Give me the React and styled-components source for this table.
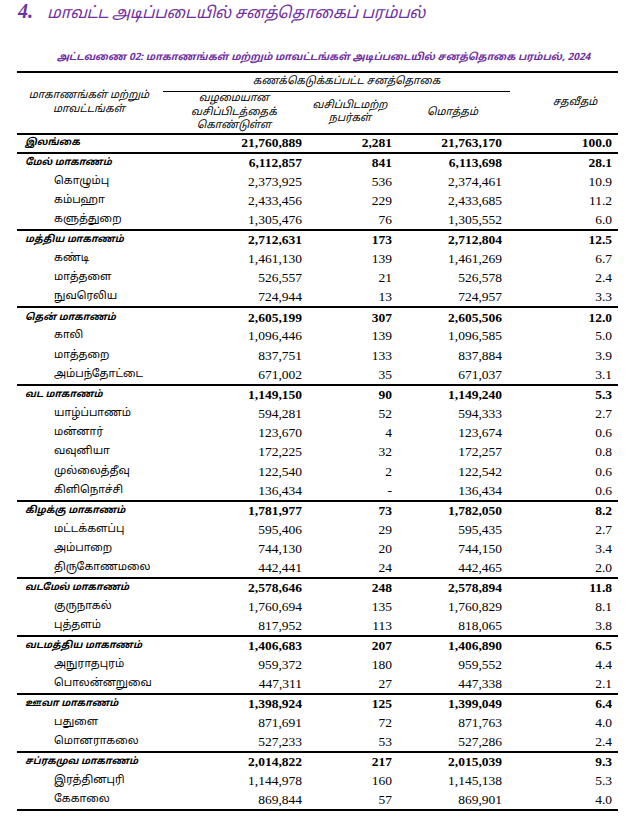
import React from "react";
import styled, { createGlobalStyle } from "styled-components";

const Global = createGlobalStyle`
  html, body { margin: 0; padding: 0; background: #fff; }
  body { font-family: "Liberation Serif", "Times New Roman", serif; color: #000; }
`;

const TAMIL = `"Noto Sans Tamil", "Lohit Tamil", "Latha", "Noto Serif Tamil", "Liberation Sans", sans-serif`;
const PURPLE = "#7030a0";

const Page = styled.div`
  width: 632px;
  padding: 0 14px 0 17px;
  box-sizing: border-box;
`;

const Title = styled.h1`
  margin: 0;
  padding: 0 0 0 1px;
  box-sizing: border-box;
  display: flex;
  align-items: baseline;
  gap: 14px;
  color: ${PURPLE};
  font-weight: normal;
  font-style: italic;
  height: 43px;
  line-height: 23px;
`;

const TitleNum = styled.span`
  font-family: "Liberation Serif", serif;
  font-size: 20px;
  font-weight: bold;
`;

const TitleText = styled.span`
  font-family: ${TAMIL};
  font-size: 16px;
  letter-spacing: -0.3px;
`;

const Caption = styled.div`
  text-align: center;
  color: ${PURPLE};
  font-family: ${TAMIL};
  font-style: italic;
  font-weight: bold;
  font-size: 10px;
  height: 28px;
  line-height: 30px;
  padding-left: 12px;
`;

const Table = styled.table`
  width: 601px;
  border-collapse: collapse;
  table-layout: fixed;
  border-top: 2px solid #000;
  border-bottom: 2px solid #000;
`;

const Th = styled.th`
  font-family: ${TAMIL};
  font-weight: normal;
  font-style: italic;
  font-size: 10.5px;
  line-height: 13.5px;
  padding: 0 ${(p) => p.$pr || 0}px 0 ${(p) => p.$pl || 0}px;
  text-align: center;
  vertical-align: middle;
  border-bottom: ${(p) => (p.$line ? "1.5px solid #000" : "none")};
  height: ${(p) => p.$h || "auto"};
`;

const HeadBottom = styled.tr`
  border-bottom: 2px solid #000;
`;

const Row = styled.tr`
  height: 19.33px;
  border-top: ${(p) => (p.$major ? "2px solid #000" : "none")};
`;

const Label = styled.td`
  font-family: ${TAMIL};
  font-size: ${(p) => (p.$major ? "9.6px" : "10.8px")};
  font-weight: ${(p) => (p.$major ? "bold" : "normal")};
  font-style: ${(p) => (p.$major ? "italic" : "normal")};
  padding: 0 0 0 ${(p) => (p.$major ? 8 : 37)}px;
  white-space: nowrap;
  overflow: hidden;
  line-height: 16px;
  vertical-align: middle;
`;

const Num = styled.td`
  font-family: "Liberation Serif", "Times New Roman", serif;
  font-size: 13.5px;
  font-weight: ${(p) => (p.$major ? "bold" : "normal")};
  text-align: right;
  padding: 0 ${(p) => p.$pr}px 0 0;
  line-height: 16px;
  vertical-align: middle;
  white-space: nowrap;
`;

const PAD = [3, 3, 8, 6];

const total = ["இலங்கை", "21,760,889", "2,281", "21,763,170", "100.0"];

const data = [
  ["மேல் மாகாணம்", "6,112,857", "841", "6,113,698", "28.1", [
    ["கொழும்பு", "2,373,925", "536", "2,374,461", "10.9"],
    ["கம்பஹா", "2,433,456", "229", "2,433,685", "11.2"],
    ["களுத்துறை", "1,305,476", "76", "1,305,552", "6.0"],
  ]],
  ["மத்திய மாகாணம்", "2,712,631", "173", "2,712,804", "12.5", [
    ["கண்டி", "1,461,130", "139", "1,461,269", "6.7"],
    ["மாத்தளை", "526,557", "21", "526,578", "2.4"],
    ["நுவரெலிய", "724,944", "13", "724,957", "3.3"],
  ]],
  ["தென் மாகாணம்", "2,605,199", "307", "2,605,506", "12.0", [
    ["காலி", "1,096,446", "139", "1,096,585", "5.0"],
    ["மாத்தறை", "837,751", "133", "837,884", "3.9"],
    ["அம்பந்தோட்டை", "671,002", "35", "671,037", "3.1"],
  ]],
  ["வட மாகாணம்", "1,149,150", "90", "1,149,240", "5.3", [
    ["யாழ்ப்பாணம்", "594,281", "52", "594,333", "2.7"],
    ["மன்னார்", "123,670", "4", "123,674", "0.6"],
    ["வவுனியா", "172,225", "32", "172,257", "0.8"],
    ["முல்லைத்தீவு", "122,540", "2", "122,542", "0.6"],
    ["கிளிநொச்சி", "136,434", "-", "136,434", "0.6"],
  ]],
  ["கிழக்கு மாகாணம்", "1,781,977", "73", "1,782,050", "8.2", [
    ["மட்டக்களப்பு", "595,406", "29", "595,435", "2.7"],
    ["அம்பாறை", "744,130", "20", "744,150", "3.4"],
    ["திருகோணமலை", "442,441", "24", "442,465", "2.0"],
  ]],
  ["வடமேல் மாகாணம்", "2,578,646", "248", "2,578,894", "11.8", [
    ["குருநாகல்", "1,760,694", "135", "1,760,829", "8.1"],
    ["புத்தளம்", "817,952", "113", "818,065", "3.8"],
  ]],
  ["வடமத்திய மாகாணம்", "1,406,683", "207", "1,406,890", "6.5", [
    ["அநுராதபுரம்", "959,372", "180", "959,552", "4.4"],
    ["பொலன்னறுவை", "447,311", "27", "447,338", "2.1"],
  ]],
  ["ஊவா மாகாணம்", "1,398,924", "125", "1,399,049", "6.4", [
    ["பதுளை", "871,691", "72", "871,763", "4.0"],
    ["மொனராகலை", "527,233", "53", "527,286", "2.4"],
  ]],
  ["சப்ரகமுவ மாகாணம்", "2,014,822", "217", "2,015,039", "9.3", [
    ["இரத்தினபுரி", "1,144,978", "160", "1,145,138", "5.3"],
    ["கேகாலை", "869,844", "57", "869,901", "4.0"],
  ]],
];

function DataRow({ cells, major, top }) {
  return (
    <Row $major={top}>
      <Label $major={major}>{cells[0]}</Label>
      {cells.slice(1, 5).map((c, i) => (
        <Num key={i} $major={major} $pr={PAD[i]}>{c}</Num>
      ))}
    </Row>
  );
}

export default function App() {
  return (
    <Page>
      <Global />
      <Title>
        <TitleNum>4.</TitleNum>
        <TitleText>மாவட்ட அடிப்படையில் சனத்தொகைப் பரம்பல்</TitleText>
      </Title>
      <Caption>
        அட்டவணை 02: மாகாணங்கள் மற்றும் மாவட்டங்கள் அடிப்படையில் சனத்தொகை பரம்பல், 2024
      </Caption>
      <Table>
        <colgroup>
          <col style={{ width: 146 }} />
          <col style={{ width: 142 }} />
          <col style={{ width: 90 }} />
          <col style={{ width: 115 }} />
          <col style={{ width: 108 }} />
        </colgroup>
        <thead>
          <tr>
            <Th rowSpan={2} $pr={2}>மாகாணங்கள் மற்றும்<br />மாவட்டங்கள்</Th>
            <Th colSpan={3} $line $h="18px" $pl={20}>கணக்கெடுக்கப்பட்ட சனத்தொகை</Th>
            <Th rowSpan={2} $pl={22}>சதவீதம்</Th>
          </tr>
          <HeadBottom>
            <Th $h="40px">வழமையான<br />வசிப்பிடத்தைக்<br />கொண்டுள்ள</Th>
            <Th>வசிப்பிடமற்ற<br />நபர்கள்</Th>
            <Th>மொத்தம்</Th>
          </HeadBottom>
        </thead>
        <tbody>
          <DataRow cells={total} major top={false} />
          {data.map((p) => (
            <React.Fragment key={p[0]}>
              <DataRow cells={p} major top />
              {p[5].map((d) => (
                <DataRow key={d[0]} cells={d} />
              ))}
            </React.Fragment>
          ))}
        </tbody>
      </Table>
    </Page>
  );
}
